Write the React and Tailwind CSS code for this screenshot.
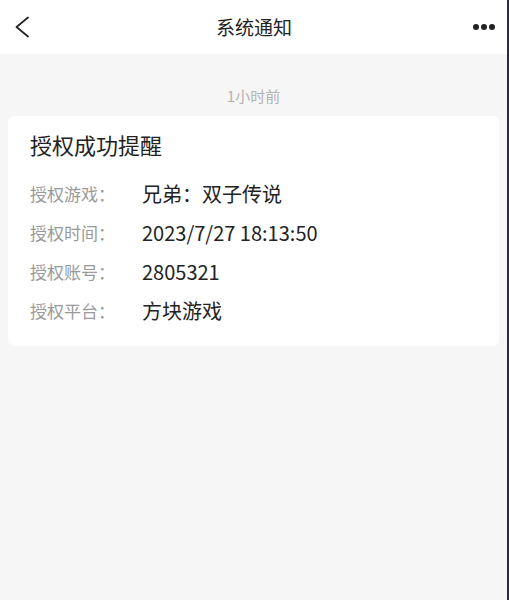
const rows = [
  ['授权游戏：', '兄弟：双子传说'],
  ['授权时间：', '2023/7/27 18:13:50'],
  ['授权账号：', '2805321'],
  ['授权平台：', '方块游戏'],
]

export default function App() {
  return (
    <div
      className="w-[509px] h-[600px] flex flex-col bg-[#f6f6f6] border-r-2 border-[#2e2b3f] overflow-hidden"
      style={{ fontFamily: '"Noto Sans CJK SC", Roboto, "Noto Sans", sans-serif' }}
    >
      {/* Header */}
      <div className="h-[54px] bg-white flex items-center justify-between pl-[15px] pr-[12px] shrink-0">
        <svg width="14" height="22" viewBox="0 0 14 22" fill="none" className="text-[#222]">
          <path d="M13 1.5 1.5 11 13 20.5" stroke="currentColor" strokeWidth="1.7" strokeLinecap="round" strokeLinejoin="round" />
        </svg>
        <div className="text-[19px] text-[#222] pl-[6px]">系统通知</div>
        <div className="flex items-center gap-[2px]">
          <span className="w-[6px] h-[6px] rounded-full bg-[#222]" />
          <span className="w-[6px] h-[6px] rounded-full bg-[#222]" />
          <span className="w-[6px] h-[6px] rounded-full bg-[#222]" />
        </div>
      </div>

      {/* Timestamp */}
      <div className="pt-[32px] pb-[10px] text-center text-[15px] leading-[20px] text-[#b3b3b3]">1小时前</div>

      {/* Card */}
      <div className="mx-[8px] bg-white rounded-[6px] px-[22px] pt-[13px] pb-[20px]">
        <div className="text-[22px] leading-[30px] text-[#222]">授权成功提醒</div>
        <div className="mt-[20px] flex flex-col gap-[9px]">
          {rows.map(([label, value]) => (
            <div key={label} className="flex items-center h-[30px]">
              <span className="w-[112px] text-[17px] text-[#9a9a9a]">{label}</span>
              <span className="text-[20px] text-[#222]">{value}</span>
            </div>
          ))}
        </div>
      </div>
    </div>
  )
}
